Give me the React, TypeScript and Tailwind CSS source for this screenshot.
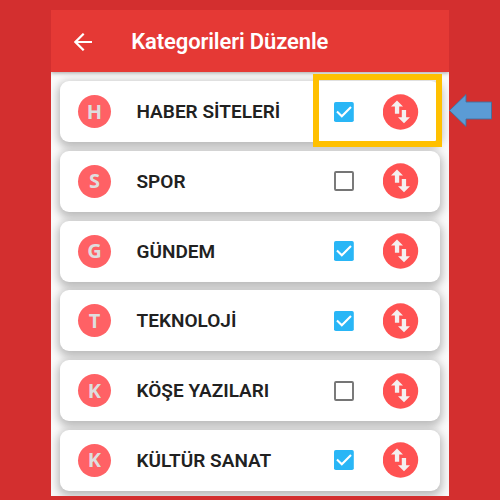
const categories = [
  { initial: 'H', name: 'HABER SİTELERİ', checked: true },
  { initial: 'S', name: 'SPOR', checked: false },
  { initial: 'G', name: 'GÜNDEM', checked: true },
  { initial: 'T', name: 'TEKNOLOJİ', checked: true },
  { initial: 'K', name: 'KÖŞE YAZILARI', checked: false },
  { initial: 'K', name: 'KÜLTÜR SANAT', checked: true },
];

function Checkbox({ checked }: { checked: boolean }) {
  return (
    <svg className="h-5 w-5 shrink-0" viewBox="0 0 20 20" fill="none">
      {checked ? (
        <>
          <rect x="0" y="0" width="19.8" height="20" rx="1.8" fill="#29b6f6" />
          <path d="M3 9.6 L7.8 14.2 L17 5" stroke="#fff" strokeWidth="2.1" />
        </>
      ) : (
        <rect x="1" y="1" width="18" height="18" rx="1" stroke="#757575" strokeWidth="1.9" />
      )}
    </svg>
  );
}

function SortButton() {
  return (
    <svg className="ml-[29px] h-9 w-9 shrink-0" viewBox="0 0 36 36">
      <circle cx="17.5" cy="18" r="17.7" fill="#ff5252" />
      <path d="M14 6.5 L20 12.6 H16.2 V19.8 H11.9 V12.6 H8 Z" fill="#f4f0f0" />
      <path d="M21 29.3 L15 23.2 H18.8 V16 H23.1 V23.2 H27 Z" fill="#f4f0f0" />
    </svg>
  );
}

export default function App() {
  return (
    <div className="relative flex h-[500px] w-[500px] overflow-hidden bg-[#d32f2f] pt-[10px] pl-[51.3px] font-['Roboto',sans-serif]">
      <div className="flex h-[486px] w-[397.5px] flex-col overflow-hidden bg-[#fafafa]">
        <header className="relative z-10 flex h-[62px] shrink-0 items-center bg-[#e53935] pt-[2px] pl-[22.5px] text-white shadow-[0_1px_4px_rgba(0,0,0,0.35)]">
          <svg className="h-[18px] w-[18px] shrink-0" viewBox="0 0 18 18" fill="none" stroke="#fff" strokeWidth="2.2">
            <path d="M18 9 H1.5 M9.7 0.7 L1.4 9 L9.7 17.3" />
          </svg>
          <h1 className="ml-[39.5px] text-[22px] leading-7 font-semibold tracking-[-0.13px] whitespace-nowrap">
            Kategorileri Düzenle
          </h1>
        </header>
        <main className="flex flex-col gap-[8.8px] px-[9px] pt-[9px]">
          {categories.map((category) => (
            <div
              key={category.name}
              className="flex h-[61px] w-[379.7px] shrink-0 items-center rounded-[9px] bg-white pl-[17.7px] shadow-[0_3px_10px_2px_rgba(0,0,0,0.27)]"
            >
              <div className="flex h-[33px] w-[33px] shrink-0 items-center justify-center rounded-full bg-[#ff6165] font-['Open_Sans',sans-serif] text-[20px] leading-none font-bold text-[#dedede]">
                {category.initial}
              </div>
              <span className="ml-[25.5px] w-[198px] pt-px text-[19px] leading-6 font-semibold tracking-[0.01px] whitespace-nowrap text-[#212121]">
                {category.name}
              </span>
              <Checkbox checked={category.checked} />
              <SortButton />
            </div>
          ))}
        </main>
      </div>
      <div className="absolute top-[74px] left-[313px] z-20 h-[73px] w-[128.7px] border-[6px] border-[#ffc000]" />
      <svg className="absolute top-[92px] left-[448px] z-20 h-[37px] w-[46px]" viewBox="0 0 46 37">
        <path
          d="M1.5 18.5 L18 2.5 V10 H43.5 V27 H18 V34.5 Z"
          fill="#5b9bd5"
          stroke="#41719c"
          strokeWidth="0.9"
        />
      </svg>
    </div>
  );
}
